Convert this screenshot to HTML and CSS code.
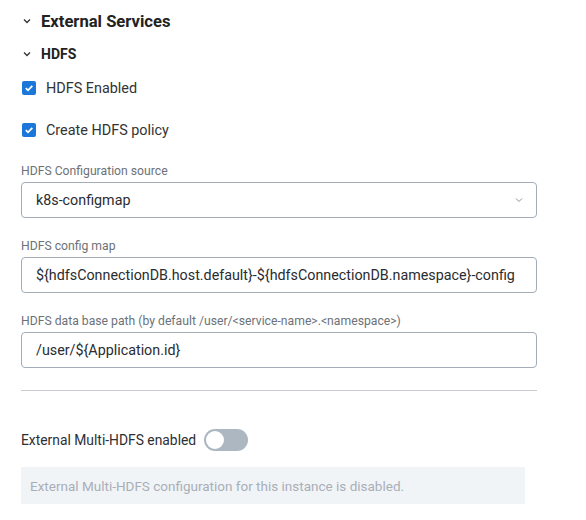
FILE: index.html
```
<!DOCTYPE html>
<html>
<head>
<meta charset="utf-8">
<link rel="stylesheet" href="styles.css">
</head>
<body>
<div class="page">
  <div class="section-head">
    <svg class="chev" viewBox="0 0 8 6" width="8" height="6"><path d="M1 1.5 L4 4.5 L7 1.5" fill="none" stroke="#333" stroke-width="1.3"/></svg>
    <span class="section-title">External Services</span>
  </div>
  <div class="sub-head">
    <svg class="chev" viewBox="0 0 8 6" width="8" height="6"><path d="M1 1.5 L4 4.5 L7 1.5" fill="none" stroke="#333" stroke-width="1.3"/></svg>
    <span class="sub-title">HDFS</span>
  </div>
  <label class="check-row first">
    <span class="checkbox"><svg viewBox="0 0 14 14" width="14" height="14"><path d="M3.8 7.2 L6 9.3 L10.3 4.8" fill="none" stroke="#fff" stroke-width="1.8"/></svg></span>
    <span class="check-label">HDFS Enabled</span>
  </label>
  <label class="check-row second">
    <span class="checkbox"><svg viewBox="0 0 14 14" width="14" height="14"><path d="M3.8 7.2 L6 9.3 L10.3 4.8" fill="none" stroke="#fff" stroke-width="1.8"/></svg></span>
    <span class="check-label">Create HDFS policy</span>
  </label>

  <div class="fields">
    <div class="field">
      <div class="field-label">HDFS Configuration source</div>
      <div class="input select">
        <span>k8s-configmap</span>
        <svg viewBox="0 0 8 6" width="8" height="6"><path d="M1 1.5 L4 4.5 L7 1.5" fill="none" stroke="#8a939c" stroke-width="1"/></svg>
      </div>
    </div>
    <div class="field">
      <div class="field-label">HDFS config map</div>
      <div class="input">${hdfsConnectionDB.host.default}-${hdfsConnectionDB.namespace}-config</div>
    </div>
    <div class="field">
      <div class="field-label">HDFS data base path (by default /user/&lt;service-name&gt;.&lt;namespace&gt;)</div>
      <div class="input">/user/${Application.id}</div>
    </div>
  </div>

  <div class="divider"></div>

  <div class="toggle-row">
    <span class="toggle-label">External Multi-HDFS enabled</span>
    <span class="toggle"><span class="knob"></span></span>
  </div>

  <div class="notice">External Multi-HDFS configuration for this instance is disabled.</div>
</div>
</body>
</html>
```
FILE: styles.css
```
* { box-sizing: border-box; }
body {
  margin: 0;
  background: #fff;
  font-family: Roboto, "Liberation Sans", sans-serif;
  color: #2d2f33;
}
.page {
  width: 537px;
  padding: 8px 0 0 21px;
  display: flex;
  flex-direction: column;
}
.section-head, .sub-head {
  display: flex;
  align-items: center;
}
.section-head { height: 26px; }
.sub-head { height: 20px; margin-top: 10px; }
.chev { margin-left: 2px; margin-right: 10px; }
.section-title { font-size: 16.6px; font-weight: 700; color: #222; }
.sub-title { font-size: 14px; font-weight: 700; color: #222; }
.check-row {
  display: flex;
  align-items: center;
  height: 20px;
  gap: 10px;
}
.check-row.first { margin-top: 14px; }
.check-row.second { margin-top: 22px; }
.checkbox {
  width: 14px;
  height: 14px;
  margin-left: 1px;
  border-radius: 2px;
  background: #1b78d8;
  display: flex;
}
.check-label { font-size: 14.4px; color: #333; }
.fields {
  display: flex;
  flex-direction: column;
  gap: 20px;
  margin-top: 23px;
}
.field-label {
  font-size: 12.2px;
  line-height: 16px;
  color: #6d7278;
  margin-bottom: 3px;
}
.input {
  height: 36px;
  border: 1px solid #a3adb8;
  border-radius: 4px;
  padding: 0 14px;
  display: flex;
  align-items: center;
  font-size: 14.3px;
  color: #2a2c30;
  white-space: nowrap;
}
.select { justify-content: space-between; padding-right: 13px; }
.divider {
  margin-top: 22px;
  height: 1px;
  background: #c9cdd2;
}
.toggle-row {
  margin-top: 38px;
  display: flex;
  align-items: center;
  gap: 8px;
  height: 22px;
}
.toggle-label { font-size: 13.85px; color: #2d2f33; }
.toggle {
  width: 44px;
  height: 22px;
  border-radius: 11px;
  background: #adb7c2;
  display: flex;
  align-items: center;
  padding-left: 2px;
}
.knob {
  width: 18px;
  height: 18px;
  border-radius: 50%;
  background: #fff;
}
.notice {
  margin-top: 16px;
  width: 504px;
  height: 37px;
  background: #f1f4f7;
  display: flex;
  align-items: center;
  padding-left: 9px;
  font-size: 13.5px;
  color: #a8afb7;
}
```
